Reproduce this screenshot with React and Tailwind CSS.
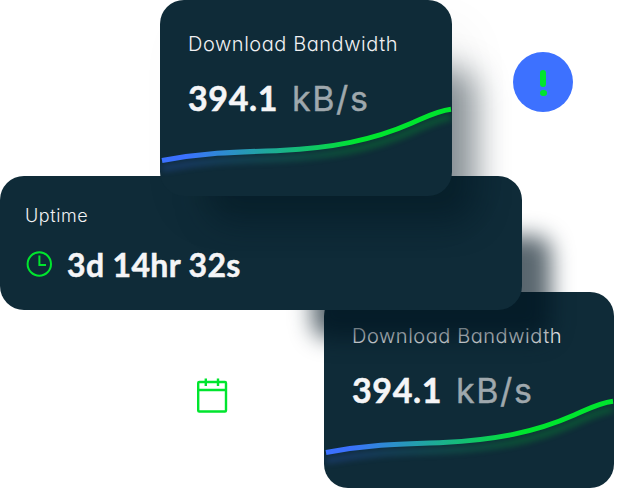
const label = "font-['Inter','Open_Sans',sans-serif] font-light text-[#f1f1f3] whitespace-nowrap [font-feature-settings:'cv11']";
const value = "font-['Lato',sans-serif] font-bold text-[#f5f5f7] whitespace-nowrap [-webkit-text-stroke:0.5px_#f5f5f7]";

function BandwidthCurve({ id }) {
  const d = 'M2 160.5 C55 151 90 152 120 150.5 C172 148 212 140.5 252 123 C265 117.5 277 111 291 109.3';
  return (
    <svg className="absolute inset-0 h-full w-full" viewBox="0 0 292 196" preserveAspectRatio="none" fill="none">
      <defs>
        <linearGradient id={id} x1="2" y1="0" x2="291" y2="0" gradientUnits="userSpaceOnUse">
          <stop offset="0" stopColor="#3b71ff" />
          <stop offset="0.08" stopColor="#3b71ff" />
          <stop offset="0.68" stopColor="#00e52e" />
          <stop offset="1" stopColor="#00e52e" />
        </linearGradient>
      </defs>
      <path d={d} stroke={`url(#${id})`} strokeWidth="6" className="translate-y-2 opacity-25 blur-[3px]" />
      <path d={d} stroke={`url(#${id})`} strokeWidth="5" />
    </svg>
  );
}

function BandwidthCard({ id, className }) {
  return (
    <section className={`relative h-[196px] overflow-hidden rounded-3xl bg-[#0f2b38] pl-7 pt-8 ${className}`}>
      <h2 className={`${label} text-[20px] leading-6 tracking-[0.55px]`}>Download Bandwidth</h2>
      <p className="mt-5 flex items-baseline gap-[14px] leading-[44px]">
        <span className={`${value} text-[34px] tracking-[0.6px]`}>394.1</span>
        <span className="font-['Inter',sans-serif] text-[34px] tracking-[1.6px] text-[#9fa8ad] [-webkit-text-stroke:0.4px_#9fa8ad]">kB/s</span>
      </p>
      <BandwidthCurve id={id} />
    </section>
  );
}

export default function App() {
  return (
    <main className="relative flex h-[488px] w-[622px] flex-col overflow-hidden bg-white">
      <div className="relative isolate z-20 ml-[160px] w-[292px]">
        <div className="absolute left-[48px] top-[68px] -z-10 h-[154px] w-[268px] rounded-3xl bg-[#00141f]/45 blur-[16px]" />
        <BandwidthCard id="curve-top" className="w-[292px] shadow-[20px_24px_50px_rgba(0,0,0,0.04)]" />
      </div>

      <div className="relative isolate z-10 -mt-5 w-[522px]">
        <div className="absolute left-[312px] top-[60px] -z-10 h-[102px] w-[239px] rounded-2xl bg-[#001420]/65 blur-[11px]" />
        <section className="h-[134px] rounded-3xl bg-[#0f2b38] pl-[25px] pt-7">
          <h2 className={`${label} text-[18px] leading-6 tracking-[0.6px]`}>Uptime</h2>
          <div className="mt-[15px] flex items-center">
            <svg className="mb-[2px] h-[29px] w-[29px]" viewBox="0 0 29 29" fill="none" stroke="#00e52e" strokeWidth="2">
              <circle cx="14.3" cy="14" r="11.7" />
              <path d="M14.4 5.5v9.5H21" />
            </svg>
            <p className={`${value} ml-[13px] text-[32px] leading-[44px] tracking-[0.35px]`}>3d 14hr 32s</p>
          </div>
        </section>
      </div>

      <BandwidthCard id="curve-bottom" className="-mt-[18px] ml-[324px] w-[290px]" />

      <div className="absolute left-[513px] top-[52px] flex h-[60px] w-[60px] flex-col items-center justify-center gap-[3px] rounded-full bg-[#3d71ff]">
        <span className="mt-px h-[17px] w-[6px] rounded-full bg-[#00e52e]" />
        <span className="h-[6px] w-[7px] rounded-full bg-[#00e52e]" />
      </div>

      <svg className="absolute left-[196px] top-[377px] h-[37px] w-[33px]" viewBox="0 0 33 37" fill="none" stroke="#00e52e" strokeWidth="2.4">
        <rect x="2.2" y="5" width="27.8" height="29.5" rx="1" />
        <path d="M2 13h28M9.8 1.5v7.5M22 1.5v7.5" />
      </svg>
    </main>
  );
}
